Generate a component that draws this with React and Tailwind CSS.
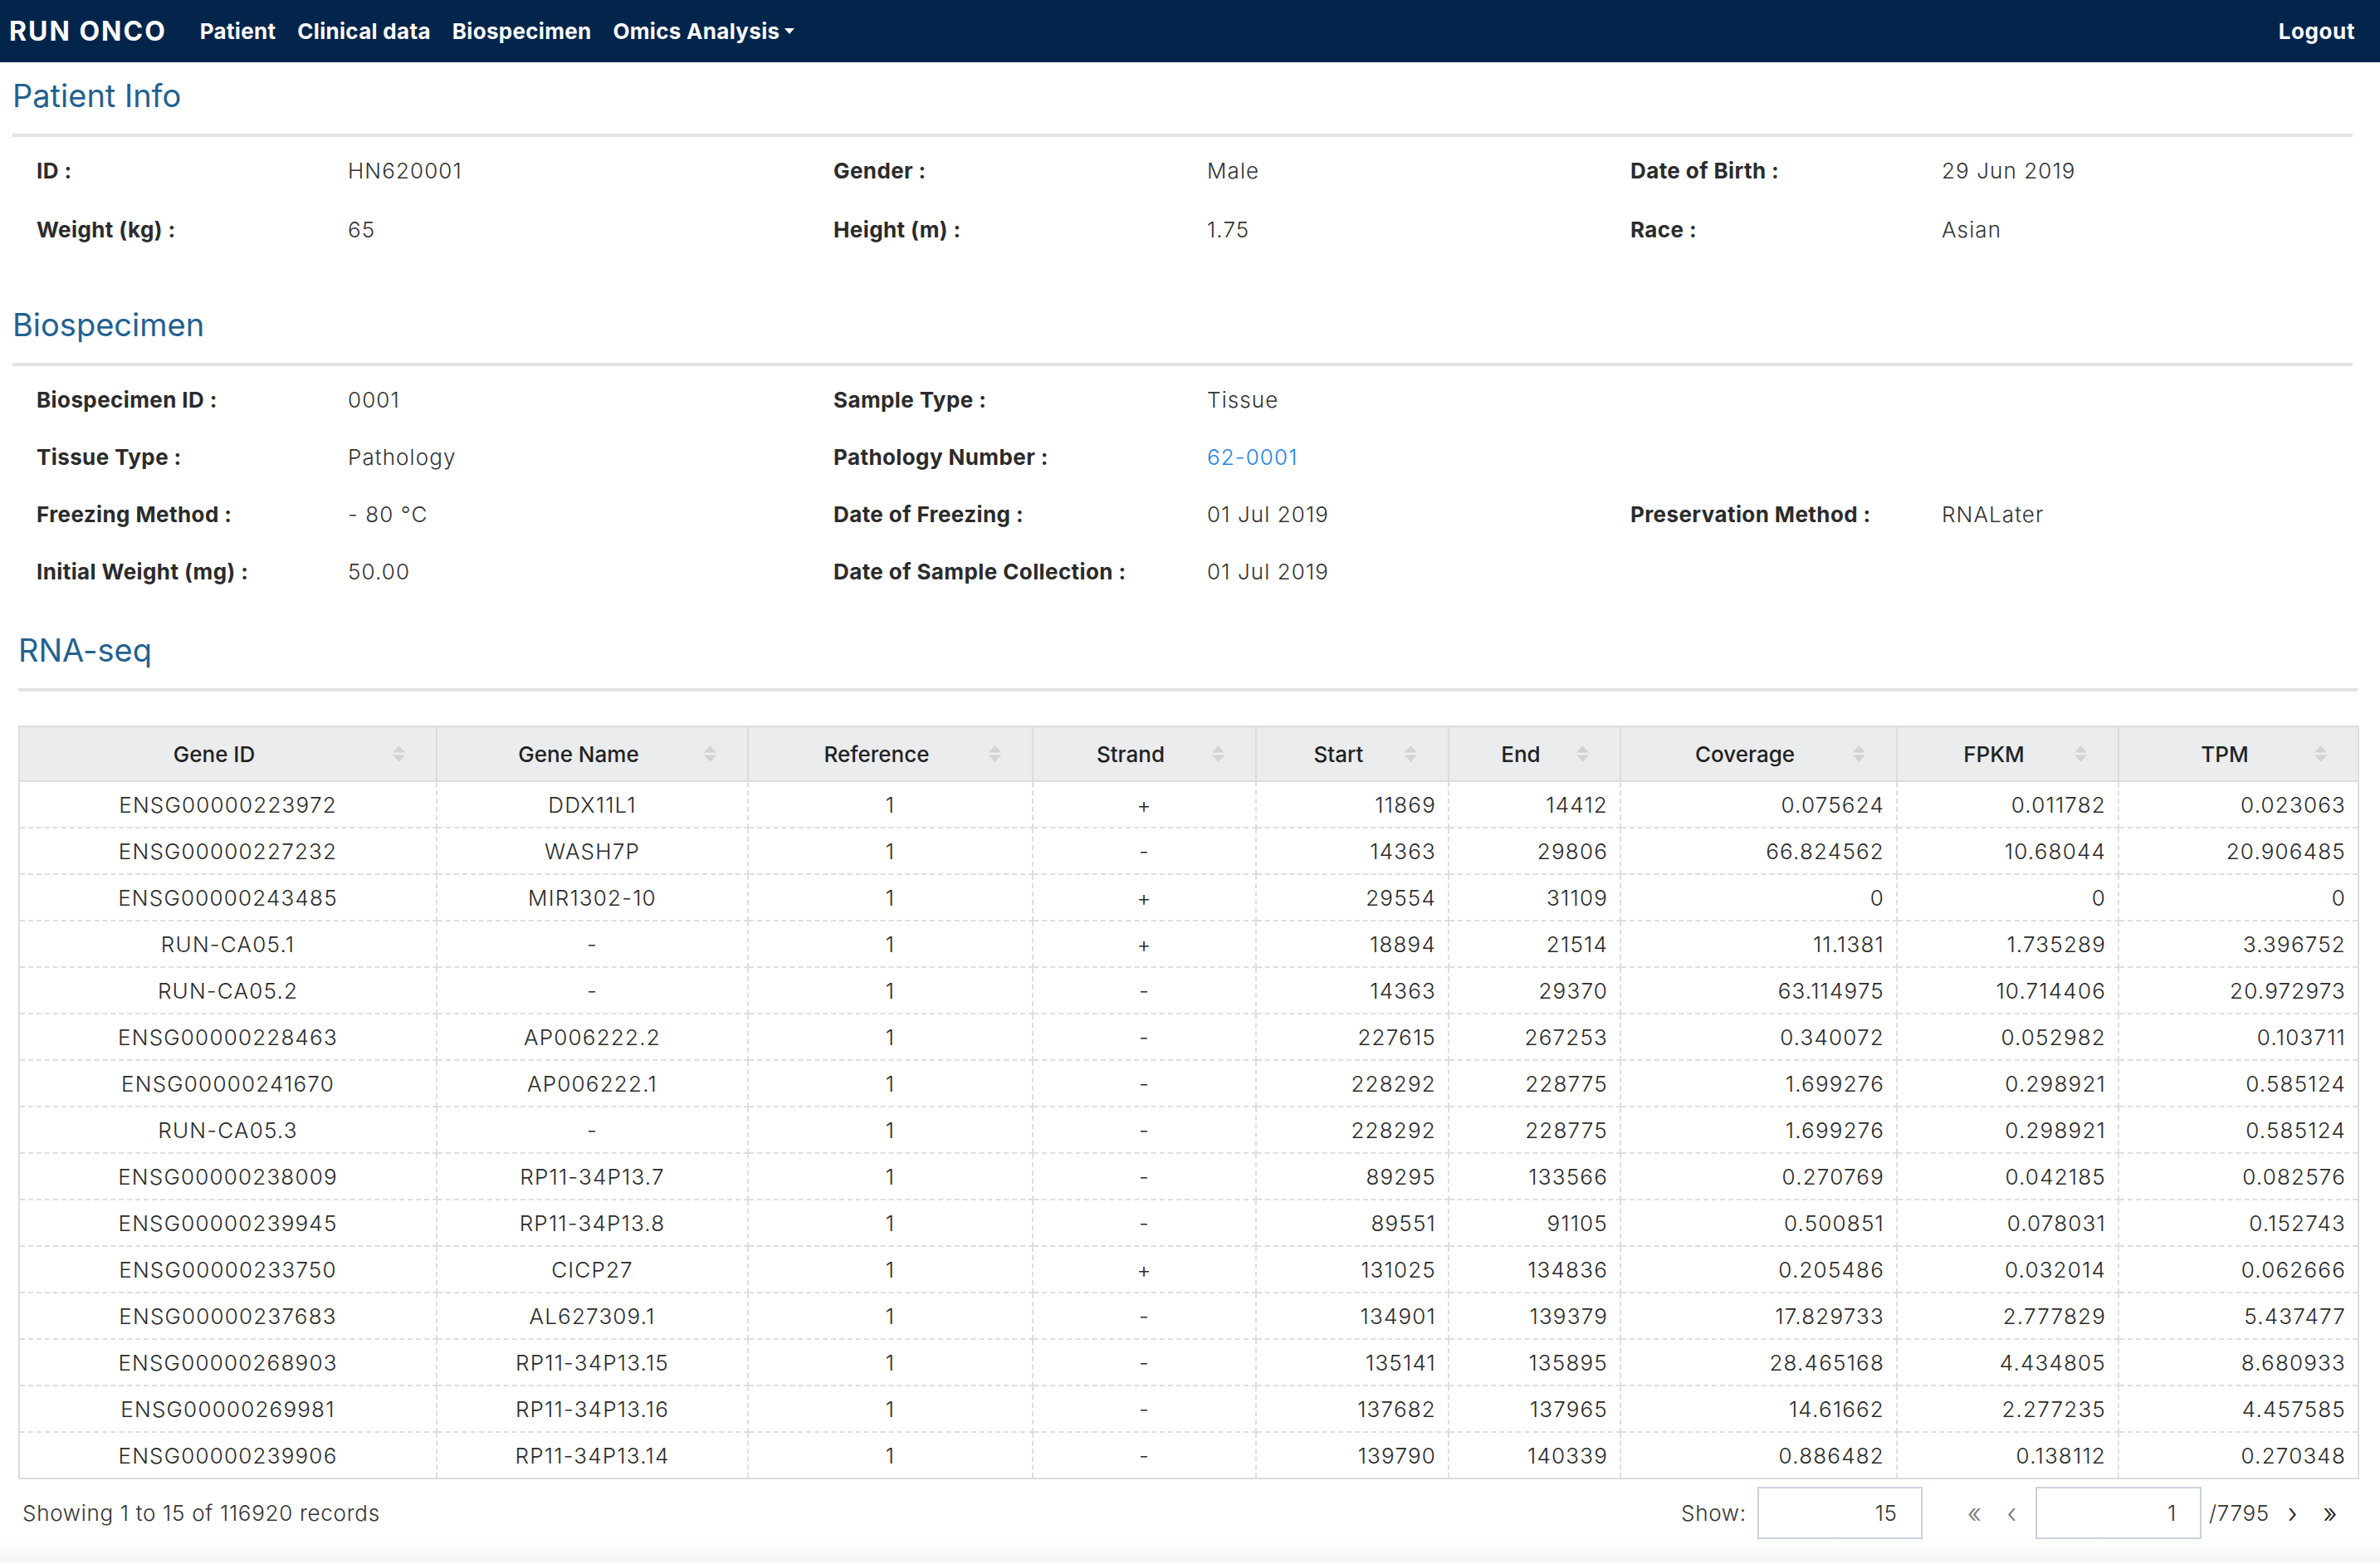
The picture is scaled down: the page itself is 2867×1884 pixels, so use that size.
import React from 'react';

const patientRows = [
  [
    ['ID :', 'HN620001'],
    ['Gender :', 'Male'],
    ['Date of Birth :', '29 Jun 2019'],
  ],
  [
    ['Weight (kg) :', '65'],
    ['Height (m) :', '1.75'],
    ['Race :', 'Asian'],
  ],
];

const bioRows = [
  [
    ['Biospecimen ID :', '0001'],
    ['Sample Type :', 'Tissue'],
    null,
  ],
  [
    ['Tissue Type :', 'Pathology'],
    ['Pathology Number :', '62-0001', true],
    null,
  ],
  [
    ['Freezing Method :', '- 80 °C'],
    ['Date of Freezing :', '01 Jul 2019'],
    ['Preservation Method :', 'RNALater'],
  ],
  [
    ['Initial Weight (mg) :', '50.00'],
    ['Date of Sample Collection :', '01 Jul 2019'],
    null,
  ],
];

const columns = [
  { name: 'Gene ID', w: 503, align: 'text-center' },
  { name: 'Gene Name', w: 375, align: 'text-center' },
  { name: 'Reference', w: 343, align: 'text-center' },
  { name: 'Strand', w: 269, align: 'text-center' },
  { name: 'Start', w: 232, align: 'text-right' },
  { name: 'End', w: 207, align: 'text-right' },
  { name: 'Coverage', w: 333, align: 'text-right' },
  { name: 'FPKM', w: 267, align: 'text-right' },
  { name: 'TPM', w: 289, align: 'text-right' },
];

const genes = [
  ['ENSG00000223972', 'DDX11L1', '1', '+', '11869', '14412', '0.075624', '0.011782', '0.023063'],
  ['ENSG00000227232', 'WASH7P', '1', '-', '14363', '29806', '66.824562', '10.68044', '20.906485'],
  ['ENSG00000243485', 'MIR1302-10', '1', '+', '29554', '31109', '0', '0', '0'],
  ['RUN-CA05.1', '-', '1', '+', '18894', '21514', '11.1381', '1.735289', '3.396752'],
  ['RUN-CA05.2', '-', '1', '-', '14363', '29370', '63.114975', '10.714406', '20.972973'],
  ['ENSG00000228463', 'AP006222.2', '1', '-', '227615', '267253', '0.340072', '0.052982', '0.103711'],
  ['ENSG00000241670', 'AP006222.1', '1', '-', '228292', '228775', '1.699276', '0.298921', '0.585124'],
  ['RUN-CA05.3', '-', '1', '-', '228292', '228775', '1.699276', '0.298921', '0.585124'],
  ['ENSG00000238009', 'RP11-34P13.7', '1', '-', '89295', '133566', '0.270769', '0.042185', '0.082576'],
  ['ENSG00000239945', 'RP11-34P13.8', '1', '-', '89551', '91105', '0.500851', '0.078031', '0.152743'],
  ['ENSG00000233750', 'CICP27', '1', '+', '131025', '134836', '0.205486', '0.032014', '0.062666'],
  ['ENSG00000237683', 'AL627309.1', '1', '-', '134901', '139379', '17.829733', '2.777829', '5.437477'],
  ['ENSG00000268903', 'RP11-34P13.15', '1', '-', '135141', '135895', '28.465168', '4.434805', '8.680933'],
  ['ENSG00000269981', 'RP11-34P13.16', '1', '-', '137682', '137965', '14.61662', '2.277235', '4.457585'],
  ['ENSG00000239906', 'RP11-34P13.14', '1', '-', '139790', '140339', '0.886482', '0.138112', '0.270348'],
];

function SortIcon() {
  return (
    <svg width="15" height="20" viewBox="0 0 15 20" className="absolute right-[37px] top-1/2 -translate-y-1/2">
      <polygon points="0,8.5 7.5,0 15,8.5" fill="#d3d3d3" />
      <polygon points="0,11.5 15,11.5 7.5,20" fill="#d3d3d3" />
    </svg>
  );
}

function InfoRow({ cells, h }) {
  return (
    <div className={`grid grid-cols-[375px_585px_450px_510px_375px_1fr] items-center pl-[29px] ${h}`}>
      {cells.map((c, i) =>
        c ? (
          <React.Fragment key={i}>
            <div className="font-bold text-[26px] tracking-[0.4px] text-[#2b2b2b]">{c[0]}</div>
            <div className={`font-light text-[26px] tracking-[1.1px] ${c[2] ? 'text-[#1f84e6]' : 'text-[#333]'}`}>{c[1]}</div>
          </React.Fragment>
        ) : (
          <React.Fragment key={i}>
            <div />
            <div />
          </React.Fragment>
        )
      )}
    </div>
  );
}

function SectionTitle({ children, mt }) {
  return (
    <>
      <h2 className={`${mt} h-[48px] leading-[48px] text-[38px] font-normal text-[#23618f]`}>{children}</h2>
      <div className="mt-[22px] h-[4px] bg-[#e3e3e3]" />
    </>
  );
}

export default function App() {
  return (
    <div className="min-h-[1884px] bg-white font-[Inter] text-[#333]">
      {/* top nav */}
      <nav className="h-[75px] bg-[#03254b] flex items-center pl-[11px] pr-[30px] text-white">
        <div className="text-[32px] font-bold tracking-[2px]">RUN ONCO</div>
        <div className="ml-[40px] flex items-center gap-[26px] text-[26px] font-bold tracking-[0.3px]">
          <span>Patient</span>
          <span>Clinical data</span>
          <span>Biospecimen</span>
          <span className="flex items-center gap-[6px]">
            Omics Analysis
            <svg width="12" height="8" viewBox="0 0 12 8">
              <polygon points="0,0 12,0 6,7" fill="#fff" />
            </svg>
          </span>
        </div>
        <div className="ml-auto text-[26px] font-bold tracking-[0.6px]">Logout</div>
      </nav>

      <div className="pl-[15px] pr-[33px]">
        <SectionTitle mt="mt-[16px]">Patient Info</SectionTitle>
        <div className="mt-[5px]">
          {patientRows.map((r, i) => (
            <InfoRow key={i} cells={r} h="h-[71px]" />
          ))}
        </div>

        <SectionTitle mt="mt-[55px]">Biospecimen</SectionTitle>
        <div className="mt-[6px]">
          {bioRows.map((r, i) => (
            <InfoRow key={i} cells={r} h="h-[69px]" />
          ))}
        </div>
      </div>

      <div className="pl-[22px] pr-[27px]">
        <SectionTitle mt="mt-[36px]">RNA-seq</SectionTitle>

        <table className="mt-[41px] w-[2818px] table-fixed border-collapse border-2 border-[#dcdcdc]">
          <colgroup>
            {columns.map((c) => (
              <col key={c.name} style={{ width: c.w }} />
            ))}
          </colgroup>
          <thead>
            <tr className="h-[66px] bg-[#ebecee]">
              {columns.map((c) => (
                <th
                  key={c.name}
                  className="relative border-2 border-[#dcdcdc] pr-[33px] text-center text-[26px] font-medium text-[#222]"
                >
                  {c.name}
                  <SortIcon />
                </th>
              ))}
            </tr>
          </thead>
          <tbody>
            {genes.map((row, ri) => (
              <tr key={ri} className="h-[56px]">
                {row.map((v, ci) => (
                  <td
                    key={ci}
                    className={`border-2 border-dashed border-[#dedede] px-[14px] text-[26px] font-light text-[#2a2a2a] tracking-[1.2px] ${columns[ci].align}`}
                  >
                    {v}
                  </td>
                ))}
              </tr>
            ))}
          </tbody>
        </table>

        {/* footer / pagination */}
        <div className="mt-[9px] flex items-center h-[63px] pl-[5px] pr-[24px] text-[26px] font-light tracking-[0.7px] text-[#333]">
          <div>Showing 1 to 15 of 116920 records</div>
          <div className="ml-auto flex items-center">
            <span>Show:</span>
            <div className="ml-[13px] w-[199px] h-[63px] border-2 border-[#c9d2de] flex items-center justify-end pr-[28px]">15</div>
            <span className="ml-[54px] text-[#777] text-[32px]">«</span>
            <span className="ml-[30px] text-[#777] text-[32px]">‹</span>
            <div className="ml-[22px] w-[200px] h-[63px] border-2 border-[#c9d2de] flex items-center justify-end pr-[28px]">1</div>
            <span className="ml-[9px]">/7795</span>
            <span className="ml-[22px] text-[32px] text-[#222]">›</span>
            <span className="ml-[30px] text-[32px] text-[#222]">»</span>
          </div>
        </div>
      </div>
      <div className="mt-[2px] h-[26px] bg-linear-to-b from-white to-[#f5f5f5]" />
    </div>
  );
}
